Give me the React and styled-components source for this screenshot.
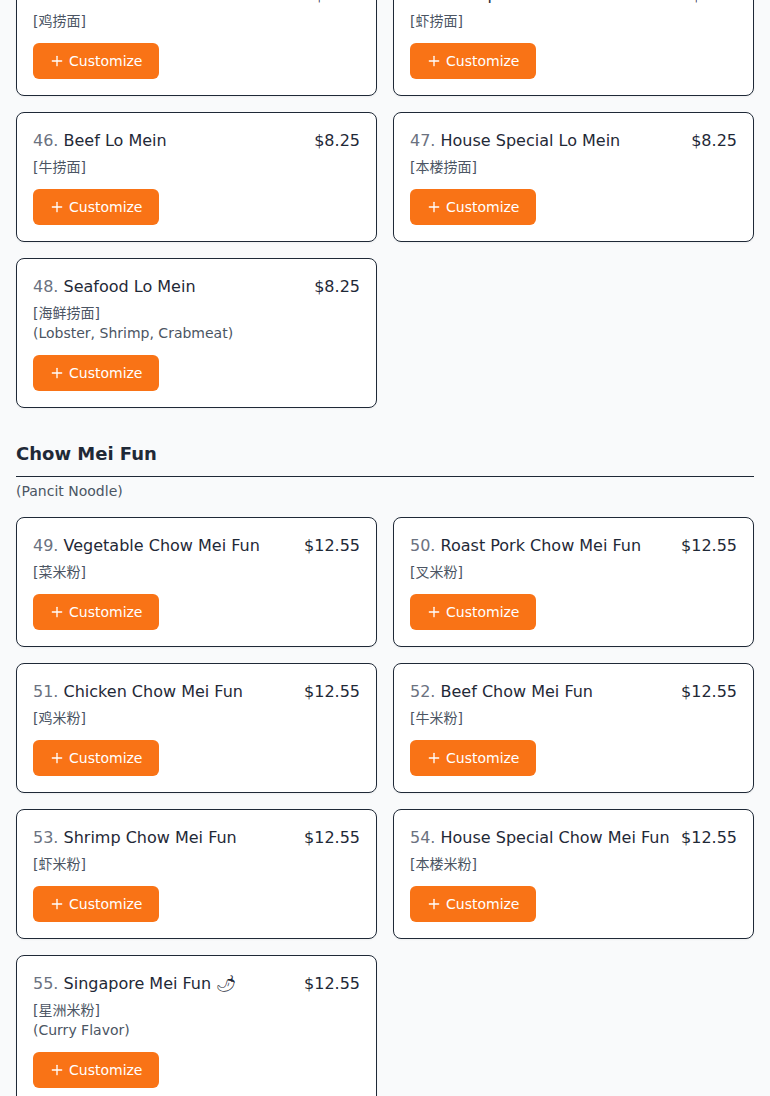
import React, { useLayoutEffect, useRef } from "react";
import styled, { createGlobalStyle } from "styled-components";
import { Plus } from "lucide-react";

const GlobalStyle = createGlobalStyle`
  html, body { margin: 0; padding: 0; }
  body {
    background: #f9fafb;
    font-family: "DejaVu Sans", "Noto Sans CJK SC", sans-serif;
    color: #1f2937;
  }
  * { box-sizing: border-box; }
`;

const Page = styled.main`
  padding: 16px 16px 32px;
  display: flex;
  flex-direction: column;
  gap: 32px;
`;

const Section = styled.section`
  display: flex;
  flex-direction: column;
`;

const SectionTitle = styled.h2`
  margin: 0;
  font-size: 18px;
  line-height: 28px;
  font-weight: 700;
  color: #1f2937;
  padding-bottom: 8px;
  border-bottom: 1px solid #1f2937;
`;

const SectionNote = styled.p`
  margin: 4px 0 0;
  font-size: 14px;
  line-height: 20px;
  color: #4b5563;
`;

const Grid = styled.div`
  margin-top: 16px;
  display: grid;
  grid-template-columns: 1fr 1fr;
  gap: 16px;
`;

const Card = styled.article`
  background: #ffffff;
  border: 1px solid #1f2937;
  border-radius: 8px;
  padding: 16px;
  box-shadow: 0 1px 2px rgba(0, 0, 0, 0.05);
  display: flex;
  flex-direction: column;
  align-items: flex-start;
`;

const TitleRow = styled.div`
  width: 100%;
  display: flex;
  justify-content: space-between;
  gap: 8px;
  font-size: 16px;
  line-height: 24px;
`;

const Name = styled.span`
  color: #1f2937;
`;

const Num = styled.span`
  color: #6b7280;
`;

const Price = styled.span`
  color: #1f2937;
  white-space: nowrap;
`;

const Chinese = styled.div`
  margin-top: 4px;
  font-size: 14px;
  line-height: 20px;
  color: #4b5563;
`;

const Desc = styled.div`
  font-size: 14px;
  line-height: 20px;
  color: #4b5563;
`;

const CustomizeButton = styled.button`
  margin-top: 12px;
  height: 36px;
  display: inline-flex;
  align-items: center;
  gap: 4px;
  padding: 0 16px;
  border: none;
  border-radius: 6px;
  background: #f97316;
  color: #ffffff;
  font-family: inherit;
  font-size: 14px;
  line-height: 20px;
  cursor: pointer;
`;

const sections = [
  {
    title: "Lo Mein",
    note: "(Soft Noodle)",
    items: [
      { n: 42, name: "Vegetable Lo Mein", price: "$8.25", zh: "菜捞面" },
      { n: 43, name: "Roast Pork Lo Mein", price: "$8.25", zh: "叉捞面" },
      { n: 44, name: "Chicken Lo Mein", price: "$8.25", zh: "鸡捞面", anchor: true },
      { n: 45, name: "Shrimp Lo Mein", price: "$8.25", zh: "虾捞面" },
      { n: 46, name: "Beef Lo Mein", price: "$8.25", zh: "牛捞面" },
      { n: 47, name: "House Special Lo Mein", price: "$8.25", zh: "本楼捞面" },
      { n: 48, name: "Seafood Lo Mein", price: "$8.25", zh: "海鲜捞面", desc: "(Lobster, Shrimp, Crabmeat)" },
    ],
  },
  {
    title: "Chow Mei Fun",
    note: "(Pancit Noodle)",
    items: [
      { n: 49, name: "Vegetable Chow Mei Fun", price: "$12.55", zh: "菜米粉" },
      { n: 50, name: "Roast Pork Chow Mei Fun", price: "$12.55", zh: "叉米粉" },
      { n: 51, name: "Chicken Chow Mei Fun", price: "$12.55", zh: "鸡米粉" },
      { n: 52, name: "Beef Chow Mei Fun", price: "$12.55", zh: "牛米粉" },
      { n: 53, name: "Shrimp Chow Mei Fun", price: "$12.55", zh: "虾米粉" },
      { n: 54, name: "House Special Chow Mei Fun", price: "$12.55", zh: "本楼米粉" },
      { n: 55, name: "Singapore Mei Fun 🌶", price: "$12.55", zh: "星洲米粉", desc: "(Curry Flavor)" },
    ],
  },
];

function MenuCard({ item, cardRef }) {
  return (
    <Card ref={cardRef}>
      <TitleRow>
        <Name>
          <Num>{item.n}.</Num> {item.name}
        </Name>
        <Price>{item.price}</Price>
      </TitleRow>
      <Chinese>[{item.zh}]</Chinese>
      {item.desc && <Desc>{item.desc}</Desc>}
      <CustomizeButton type="button">
        <Plus size={16} strokeWidth={2} />
        Customize
      </CustomizeButton>
    </Card>
  );
}

export default function App() {
  const anchorRef = useRef(null);

  useLayoutEffect(() => {
    const el = anchorRef.current;
    if (!el) return;
    const top = el.getBoundingClientRect().top + window.scrollY;
    window.scrollTo(0, top + 34);
  }, []);

  return (
    <>
      <GlobalStyle />
      <Page>
        {sections.map((s) => (
          <Section key={s.title}>
            <SectionTitle>{s.title}</SectionTitle>
            <SectionNote>{s.note}</SectionNote>
            <Grid>
              {s.items.map((it) => (
                <MenuCard key={it.n} item={it} cardRef={it.anchor ? anchorRef : undefined} />
              ))}
            </Grid>
          </Section>
        ))}
      </Page>
    </>
  );
}
